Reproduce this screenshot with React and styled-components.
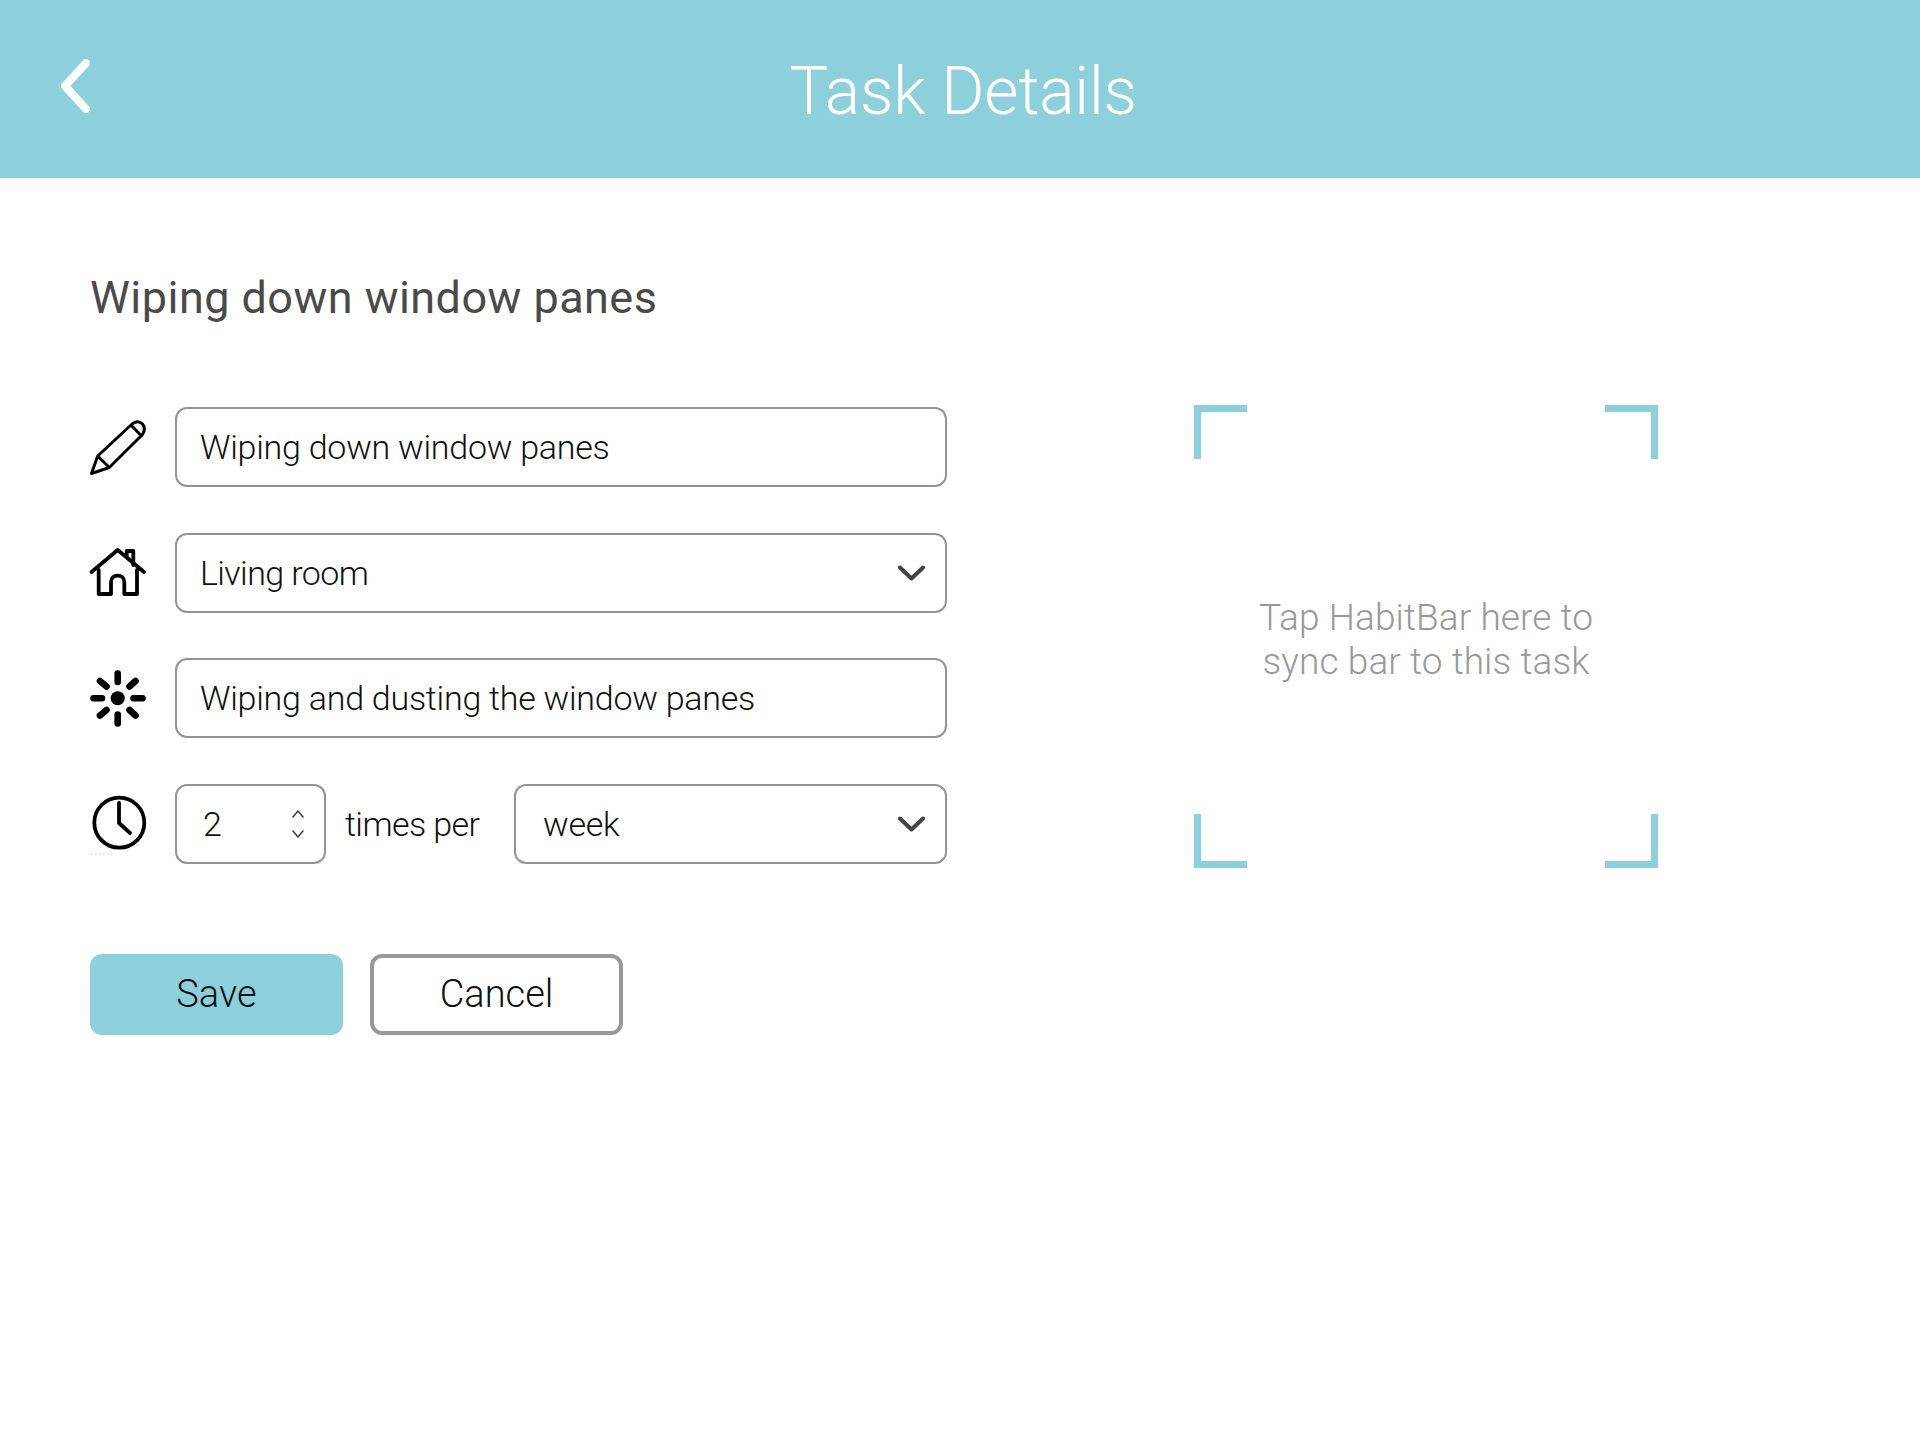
import React from 'react';
import styled, { createGlobalStyle } from 'styled-components';

const TEAL = '#8dd0db';
const LINE = '#949494';

const GlobalStyle = createGlobalStyle`
  html, body {
    margin: 0;
    padding: 0;
    background: #fff;
  }
  body {
    font-family: Roboto, "Liberation Sans", Arial, sans-serif;
    font-weight: 300;
    color: #111;
  }
`;

const Page = styled.div`
  width: 1920px;
  height: 1440px;
  overflow: hidden;
`;

const Header = styled.header`
  height: 178px;
  background: ${TEAL};
  display: grid;
  grid-template-columns: 60px 1fr 60px;
  padding: 0 54px 0 60px;
  box-sizing: border-box;
  align-items: start;
`;

const BackIcon = styled.svg`
  width: 30px;
  height: 54px;
  margin-top: 59px;
  fill: none;
  stroke: #fff;
  stroke-width: 8;
  stroke-linecap: round;
  stroke-linejoin: round;
`;

const Title = styled.h1`
  margin: 53px 0 0;
  font-size: 66px;
  line-height: 78px;
  letter-spacing: -0.2px;
  font-weight: 300;
  color: #fff;
  text-align: center;
`;

const Main = styled.main`
  padding: 0 90px;
`;

const Heading = styled.h2`
  margin: 0;
  padding: 94px 0 83px;
  font-size: 45px;
  line-height: 52px;
  letter-spacing: 0.45px;
  font-weight: 400;
  color: #4a4a4a;
`;

const Columns = styled.div`
  display: flex;
  align-items: flex-start;
  gap: 247px;
`;

const Form = styled.div`
  width: 857px;
`;

const Rows = styled.div`
  display: flex;
  flex-direction: column;
  gap: 45.6px;
`;

const Row = styled.div`
  display: flex;
  align-items: center;
  gap: 29px;
  height: 80px;
`;

const IconSlot = styled.svg`
  flex: none;
  width: 56px;
  height: ${p => p.$h}px;
  overflow: visible;
  fill: none;
  stroke: #000;
  stroke-linecap: round;
  stroke-linejoin: round;
  stroke-width: ${p => p.$sw}px;
`;

const Field = styled.div`
  flex: ${p => (p.$width ? 'none' : 1)};
  width: ${p => (p.$width ? `${p.$width}px` : 'auto')};
  height: 80px;
  box-sizing: border-box;
  border: 2px solid ${LINE};
  border-radius: 12px;
  background: #fff;
  padding: 0 ${p => p.$pr || 23}px 0 ${p => p.$pl || 23}px;
  display: flex;
  align-items: center;
  justify-content: space-between;
  font-size: 34px;
  letter-spacing: ${p => p.$tight ? '-0.6px' : '-0.25px'};
  color: #111;
`;

const Suffix = styled.span`
  flex: none;
  width: 150px;
  margin-left: -10px;
  margin-right: -10px;
  font-size: 34px;
  letter-spacing: -0.6px;
  color: #111;
`;

const Chevron = styled.svg`
  width: 27px;
  height: 16px;
  fill: none;
  stroke: #444;
  stroke-width: 4;
  stroke-linecap: round;
  stroke-linejoin: round;
`;

const Spinner = styled.svg`
  width: 14px;
  height: 28px;
  fill: none;
  stroke: #444;
  stroke-width: 1.6;
  stroke-linecap: round;
  stroke-linejoin: round;
`;

const Actions = styled.div`
  display: flex;
  gap: 27px;
  margin-top: 90px;
`;

const ActionButton = styled.button`
  width: 253px;
  height: 81px;
  box-sizing: border-box;
  border-radius: 12px;
  font-family: inherit;
  font-weight: 300;
  font-size: 38px;
  color: #111;
  padding: 0;
  background: ${p => (p.$primary ? TEAL : '#fff')};
  border: ${p => (p.$primary ? 'none' : `4px solid #999`)};
`;

const SyncPanel = styled.div`
  width: 464px;
  height: 463px;
  margin-top: -2px;
  display: grid;
  grid-template-columns: 53px 1fr 53px;
  grid-template-rows: 54px 1fr 54px;
`;

const Corner = styled.span`
  border-color: ${TEAL};
  border-style: solid;
  border-width: ${p => (p.$bottom ? 0 : 7)}px ${p => (p.$right ? 7 : 0)}px ${p => (p.$bottom ? 7 : 0)}px ${p => (p.$right ? 0 : 7)}px;
`;

const Hint = styled.p`
  grid-column: 1 / -1;
  margin: 0;
  align-self: center;
  padding-top: 6px;
  text-align: center;
  font-size: 37px;
  line-height: 43.5px;
  letter-spacing: 0.1px;
  color: #999;
`;

function Pencil() {
  return (
    <IconSlot $h={56} $sw={3} viewBox="0 0 56 56">
      <path d="M1.5 54.5 L7.7 37 L41 6 C45.5 2 49.5 2 52.5 5 C55 8 55 11.5 52.5 15.5 L19.3 48.5 Z M41 6 L51.5 17 M7.7 37 L19.3 48.5" />
    </IconSlot>
  );
}

function House() {
  return (
    <IconSlot $h={47} $sw={3.8} viewBox="0 0 56 47">
      <path d="M1.5 23 L27.7 1 L54 23" />
      <path d="M36.7 8.5 V2 H43.3 V16" />
      <path d="M8.7 21 V45 H21 V33 C21 24.5 34.3 24.5 34.3 33 V45 H47 V21" />
    </IconSlot>
  );
}

function Sun() {
  return (
    <IconSlot $h={57} $sw={6.6} viewBox="0 0 56 57">
      <circle cx="27.7" cy="28.3" r="7" fill="#000" stroke="none" />
      <path d="M27.7 3.5 V12 M27.7 44.5 V53.5 M3.5 28.3 H12 M43.5 28.3 H52.5 M10 11 L16.5 16.5 M45.5 11 L39.5 16.5 M10 45.5 L16.5 40 M45.5 45.5 L39.5 40" />
    </IconSlot>
  );
}

function Clock() {
  return (
    <IconSlot $h={58} $sw={3.8} viewBox="0 0 56 58">
      <circle cx="29.3" cy="27.7" r="25" />
      <path d="M29 8 V28 L40 38" />
      <path d="M1 59 H22" stroke="#bbb" strokeWidth=".8" strokeDasharray="1.5 2.5" strokeLinecap="butt" />
    </IconSlot>
  );
}

function DropChevron() {
  return (
    <Chevron viewBox="0 0 27 16">
      <path d="M2 2.5 L13.5 13.5 L25 2.5" />
    </Chevron>
  );
}

export default function App() {
  return (
    <Page>
      <GlobalStyle />
      <Header>
        <BackIcon viewBox="0 0 30 54">
          <path d="M26 4 L5 27 L26 50" />
        </BackIcon>
        <Title>Task Details</Title>
      </Header>
      <Main>
        <Heading>Wiping down window panes</Heading>
        <Columns>
          <Form>
            <Rows>
              <Row>
                <Pencil />
                <Field>Wiping down window panes</Field>
              </Row>
              <Row>
                <House />
                <Field $pr={20} $tight>
                  Living room
                  <DropChevron />
                </Field>
              </Row>
              <Row>
                <Sun />
                <Field>Wiping and dusting the window panes</Field>
              </Row>
              <Row>
                <Clock />
                <Field $width={151} $pl={26} $pr={19}>
                  2
                  <Spinner viewBox="0 0 14 28">
                    <path d="M2 7 L7 1 L12 7 M2 21 L7 27 L12 21" />
                  </Spinner>
                </Field>
                <Suffix>times per</Suffix>
                <Field $pl={27} $pr={20}>
                  week
                  <DropChevron />
                </Field>
              </Row>
            </Rows>
            <Actions>
              <ActionButton $primary>Save</ActionButton>
              <ActionButton>Cancel</ActionButton>
            </Actions>
          </Form>
          <SyncPanel>
            <Corner />
            <span />
            <Corner $right />
            <Hint>
              Tap HabitBar here to
              <br />
              sync bar to this task
            </Hint>
            <Corner $bottom />
            <span />
            <Corner $bottom $right />
          </SyncPanel>
        </Columns>
      </Main>
    </Page>
  );
}
